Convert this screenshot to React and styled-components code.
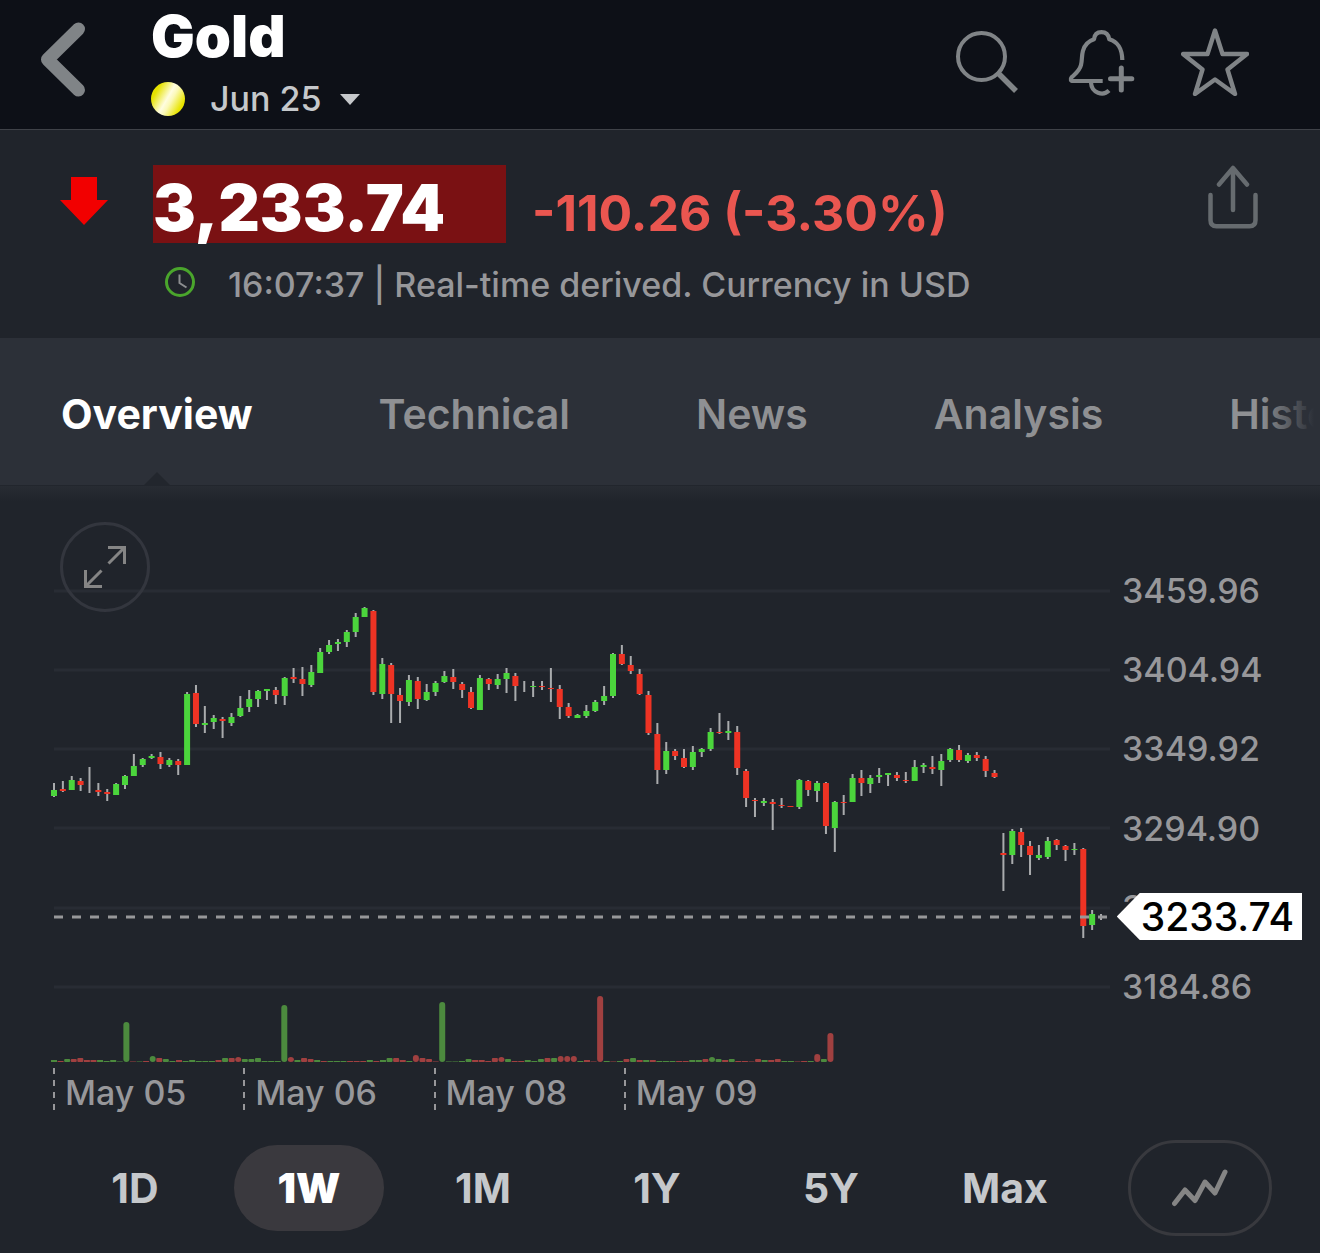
import React, { useState } from "react";
import styled, { createGlobalStyle, css } from "styled-components";

const TABS = ["Overview", "Technical", "News", "Analysis", "Historical"];
const RANGES = ["1D", "1W", "1M", "1Y", "5Y", "Max"];
const DAYS = ["May 05", "May 06", "May 08", "May 09"];
const PRICES = ["3459.96", "3404.94", "3349.92", "3294.90", "3239.88", "3184.86"];
const GRID_LINES = [591, 670, 749, 828, 908, 987];

const UP = "#4bd53c";
const DOWN = "#ee3324";

// direction, wick top, wick bottom, body top, body bottom
const CANDLES = [
  ["u", 783, 797, 790, 796], ["d", 781, 792, 789, 791], ["u", 776, 790, 780, 790],
  ["d", 778, 791, 781, 785], ["n", 767, 793, 790, 790], ["d", 783, 796, 790, 792],
  ["d", 789, 801, 792, 794], ["u", 783, 795, 784, 795], ["u", 775, 789, 776, 785],
  ["u", 754, 776, 766, 776], ["u", 758, 767, 759, 765], ["u", 754, 759, 756, 758],
  ["d", 752, 769, 757, 764], ["u", 758, 767, 760, 765], ["d", 759, 775, 761, 765],
  ["u", 692, 765, 694, 765], ["d", 685, 727, 693, 724], ["u", 706, 733, 723, 725],
  ["u", 715, 729, 718, 722], ["d", 717, 738, 719, 721], ["u", 713, 726, 717, 723],
  ["u", 696, 717, 708, 716], ["u", 690, 712, 699, 707], ["u", 690, 707, 691, 699],
  ["u", 689, 700, 689, 691], ["d", 687, 704, 690, 695], ["u", 677, 705, 678, 696],
  ["d", 668, 683, 677, 679], ["d", 667, 696, 679, 684], ["u", 665, 687, 672, 685],
  ["u", 648, 673, 652, 673], ["u", 640, 654, 645, 652], ["u", 639, 651, 642, 644],
  ["u", 630, 647, 632, 642], ["u", 613, 637, 617, 632], ["u", 607, 617, 608, 617],
  ["d", 610, 695, 611, 692], ["u", 658, 699, 664, 694], ["d", 663, 723, 665, 694],
  ["d", 688, 723, 695, 701], ["u", 675, 706, 680, 702], ["d", 677, 709, 681, 699],
  ["u", 684, 701, 692, 700], ["u", 681, 696, 683, 692], ["u", 671, 683, 676, 682],
  ["d", 669, 689, 677, 682], ["d", 682, 698, 684, 690], ["d", 687, 709, 692, 708],
  ["u", 675, 710, 678, 710], ["d", 678, 690, 679, 684], ["u", 674, 689, 679, 685],
  ["u", 668, 693, 673, 679], ["d", 673, 701, 676, 686], ["n", 681, 692, 686, 686],
  ["u", 681, 697, 686, 687], ["d", 681, 690, 686, 687], ["d", 668, 702, 688, 689],
  ["d", 685, 719, 689, 707], ["d", 703, 718, 707, 716], ["u", 714, 718, 715, 718],
  ["u", 705, 718, 711, 716], ["u", 700, 712, 702, 711], ["u", 686, 705, 696, 701],
  ["u", 653, 698, 654, 696], ["d", 645, 665, 654, 664], ["d", 656, 674, 665, 671],
  ["d", 669, 695, 674, 694], ["d", 691, 735, 695, 733], ["d", 723, 784, 734, 770],
  ["u", 742, 774, 751, 770], ["d", 749, 760, 751, 756], ["d", 749, 768, 758, 767],
  ["u", 746, 770, 752, 767], ["u", 748, 757, 749, 752], ["u", 728, 751, 732, 749],
  ["d", 713, 734, 732, 733], ["u", 721, 740, 731, 733], ["d", 726, 775, 732, 768],
  ["d", 769, 807, 771, 798], ["d", 798, 817, 800, 801], ["u", 798, 806, 801, 803],
  ["d", 799, 830, 802, 804], ["d", 798, 808, 805, 806], ["d", 806, 807, 806, 807],
  ["u", 779, 809, 780, 807], ["d", 780, 796, 781, 790], ["u", 781, 802, 783, 791],
  ["d", 782, 834, 783, 826], ["u", 801, 852, 802, 828], ["d", 795, 815, 802, 803],
  ["u", 774, 802, 778, 802], ["d", 770, 796, 778, 783], ["u", 775, 793, 778, 784],
  ["u", 768, 783, 775, 777], ["u", 773, 786, 773, 775], ["d", 772, 781, 775, 778],
  ["d", 772, 783, 780, 781], ["u", 760, 781, 767, 781], ["u", 763, 773, 765, 767],
  ["d", 756, 774, 767, 769], ["u", 754, 786, 761, 770], ["u", 748, 762, 749, 760],
  ["d", 745, 762, 750, 760], ["u", 753, 763, 755, 761], ["d", 752, 761, 755, 758],
  ["d", 756, 777, 759, 771], ["d", 770, 778, 773, 777], ["d", 833, 891, 853, 855],
  ["u", 829, 864, 831, 855], ["d", 828, 857, 832, 845], ["d", 841, 875, 846, 855],
  ["u", 845, 860, 855, 858], ["u", 837, 859, 841, 857], ["d", 839, 850, 840, 845],
  ["d", 845, 861, 846, 850], ["u", 843, 855, 849, 850], ["d", 848, 938, 849, 926],
  ["u", 910, 930, 914, 925], ["n", 914, 920, 917, 917],
];

// sign gives the colour, size gives the height
const VOLUMES = [
  2, -1, 3, -3, -4, -2, -2, 2, 1, 2, 0.5, 40, -0.5, 0.5, -1, 6, -4, 3, 1, -2,
  1, 2, 1, 1, 1, -2, 4, -4, -5, 3, 3, 4, 1, 1, 1, 57, -5, 2, -4, -3,
  2, -1, 1, 1, 1, -1, -1, -1, 2, -1, 2, 4, -4, -2, 1, -7, -4, -3, -0.5, 60,
  0.5, 0.5, 1, 3, -2, -2, -1, -4, -5, 3, -1, -1, 2, 1, 3, -4, 4, -6, -6, -6,
  1, -2, -0.5, -66, 1, -0.5, 1, -3, 4, -2, 2, -2, 1, 1, 1, -1, -1, 2, 2, -3,
  5, 3, -2, 3, -1, -1, -0.5, -3, 2, -2, -3, 1, 1, -0.5, -1, 1, -8, 3, -29,
];

const Chart = () => {
  return (
    <ChartSvg viewBox="48 571 1062 497" preserveAspectRatio="none" role="img" aria-label="Gold price, one week">
      {GRID_LINES.map((y) => (
        <line key={y} x1="54" x2="1110" y1={y} y2={y} stroke="#282c34" strokeWidth="3" />
      ))}
      {CANDLES.map(([dir, high, low, top, bottom], i) => {
        const x = 54 + i * 8.873;
        return (
          <g key={i}>
            <rect x={x - 1} y={high} width="2" height={low - high} fill="#a9abad" />
            {dir !== "n" && (
              <rect x={x - 3} y={top} width="6" height={bottom - top} fill={dir === "u" ? UP : DOWN} />
            )}
          </g>
        );
      })}
      {VOLUMES.map((v, i) => {
        const h = Math.abs(v);
        return (
          <rect
            key={i}
            x={51 + i * 6.58}
            y={1062 - h}
            width="6"
            height={h}
            rx={h > 4 ? 3 : h > 2 ? 1 : 0}
            fill={v > 0 ? "#4c8a3e" : "#a04040"}
          />
        );
      })}
      <line x1="54" x2="1108" y1="917" y2="917" stroke="#97989a" strokeWidth="3" strokeDasharray="9 9" />
    </ChartSvg>
  );
};

const App = () => {
  const [tab, setTab] = useState("Overview");
  const [range, setRange] = useState("1W");

  return (
    <Page>
      <GlobalStyle />
      <Header>
        <IconButton aria-label="Back">
          <svg width="46" height="76" viewBox="0 0 46 76" fill="none" stroke="#808487" strokeWidth="13" strokeLinecap="round" strokeLinejoin="round">
            <path d="M38.500 8 7.500 38.500 38.500 69" />
          </svg>
        </IconButton>
        <TitleWrap>
          <Title>Gold</Title>
          <Contract>
            <Coin />
            Jun 25
            <Caret />
          </Contract>
        </TitleWrap>
        <Actions>
          <IconButton aria-label="Search">
            <svg width="68" height="68" viewBox="0 0 68 68" fill="none" stroke="#808487" strokeWidth="4">
              <circle cx="28.5" cy="28.5" r="23.5" />
              <path d="M45 45 63 63" strokeWidth="5.5" />
            </svg>
          </IconButton>
          <IconButton aria-label="Add alert">
            <svg width="68" height="68" viewBox="0 0 68 68" fill="none" stroke="#808487" strokeWidth="4.2" strokeLinejoin="round">
              <path d="M35.7 53H6C3.600 53 3.200 51 4.600 49.300C8.500 45.500 12.500 43 14 37C15.300 32 14.500 28 15.900 23C17.500 17 21 13.300 27 11.300C27.500 6.500 30.500 4.200 34.500 4.200S41.500 6.500 42.300 11.300C51 14 55 20 55.300 32" />
              <path d="M24 54.500C24.500 65 36 68.500 42 62.500" />
              <path d="M43.500 50.700H64.800M54.300 40V62" strokeWidth="5" strokeLinecap="round" />
            </svg>
          </IconButton>
          <IconButton aria-label="Add to watchlist">
            <svg width="68" height="68" viewBox="0 0 68 68" fill="none" stroke="#808487" strokeWidth="4.4" strokeLinejoin="round">
              <path d="M34 2.500 41.500 26H66L46.500 41.500 54 66 34 51.500 14 66 21.500 41.500 2 26H26.500Z" />
            </svg>
          </IconButton>
        </Actions>
      </Header>

      <Quote>
        <svg width="48" height="48" viewBox="0 0 48 48">
          <path d="M11 0H37V23H48L24 48 0 23H11Z" fill="#f20000" />
        </svg>
        <QuoteInfo>
          <PriceRow>
            <Price>3,233.74</Price>
            <Change>-110.26 (-3.30%)</Change>
          </PriceRow>
          <Status>
            <svg width="30" height="30" viewBox="0 0 30 30" fill="none">
              <circle cx="15" cy="15" r="13.500" stroke="#4aa52c" strokeWidth="3" />
              <path d="M14.500 7.500V16L21.500 20.500" stroke="#8c8e90" strokeWidth="2" />
            </svg>
            16:07:37 | Real-time derived. Currency in USD
          </Status>
        </QuoteInfo>
        <IconButton aria-label="Share">
          <svg width="50" height="64" viewBox="0 0 50 64" fill="none" stroke="#666b6f" strokeWidth="4.500" strokeLinecap="round" strokeLinejoin="round">
            <path d="M2.500 30V55Q2.500 61.300 8.500 61.300H41.500Q47.500 61.300 47.500 55V30" />
            <path d="M25 3.500V45M11 19.500 25 3 39 19.500" />
          </svg>
        </IconButton>
      </Quote>

      <Tabs>
        {TABS.map((name) => (
          <Tab key={name} active={name === tab ? 1 : 0} onClick={() => setTab(name)}>
            {name}
          </Tab>
        ))}
      </Tabs>

      <ChartWrap>
        <Expand aria-label="Full screen">
          <svg width="44" height="44" viewBox="0 0 44 44" fill="none" stroke="#858585" strokeWidth="3">
            <path d="M25 2.500H41.500V19M41 3 25.500 18.500M19 41.500H2.500V25M3 41 18.500 25.500" />
          </svg>
        </Expand>
        <Chart />
        <PriceAxis>
          {PRICES.map((p) => (
            <span key={p}>{p}</span>
          ))}
        </PriceAxis>
        <Days>
          {DAYS.map((d) => (
            <Day key={d}>{d}</Day>
          ))}
        </Days>
        <PriceTag>3233.74</PriceTag>
      </ChartWrap>

      <Footer>
        <Ranges>
          {RANGES.map((r) => (
            <Range key={r} active={r === range ? 1 : 0} onClick={() => setRange(r)}>
              {r}
            </Range>
          ))}
        </Ranges>
        <ChartType aria-label="Chart type">
          <svg width="56" height="38" viewBox="0 0 56 38" fill="none" stroke="#858585" strokeWidth="5" strokeLinecap="round" strokeLinejoin="round">
            <path d="M2.500 34.500 13 21 23 31.500 33 13 43 24 53 3" />
          </svg>
        </ChartType>
      </Footer>
    </Page>
  );
};

export default App;

const GlobalStyle = createGlobalStyle`
  body {
    margin: 0;
    background: #20242b;
  }
  * {
    box-sizing: border-box;
  }
  svg {
    display: block;
  }
  button {
    margin: 0;
    padding: 0;
    border: 0;
    background: none;
    color: inherit;
    font: inherit;
    cursor: pointer;
  }
`

const Page = styled.div`
    background: #20242b;
    color: #97979a;
    font-family: Inter, "Liberation Sans", sans-serif;
    font-size: 34px;
    font-weight: 500;
    line-height: 40px;
`

const Header = styled.header`
    display: flex;
    align-items: flex-start;
    height: 130px;
    padding: 0 71px 0 40px;
    background: #0d1017;
    border-bottom: 1px solid #3f4248;
    > button {
      margin-top: 21px;
    }
`

const IconButton = styled.button`
    flex: none;
    display: block;
`

const TitleWrap = styled.div`
    flex: 1;
    padding-left: 65px;
`

const Title = styled.h1`
    margin: 0;
    color: #fff;
    font-size: 58px;
    font-weight: 900;
    line-height: 72px;
`

const Contract = styled.button`
    display: flex;
    align-items: center;
    margin-top: 7px;
    && {
      color: #c5c8cb;
    }
`

const Coin = styled.span`
    width: 34px;
    height: 34px;
    margin-right: 25px;
    border-radius: 50%;
    background: linear-gradient(120deg, #e6e200 20%, #fffde0 48%, #fbf9b8 58%, #e8e400 82%);
`

const Caret = styled.span`
    margin-left: 18px;
    border: 10px solid transparent;
    border-top: 11px solid #c5c8cb;
    border-bottom: 0;
`

const Actions = styled.div`
    display: flex;
    gap: 46px;
    margin-top: 28px;
`

const Quote = styled.section`
    display: flex;
    align-items: flex-start;
    height: 208px;
    padding: 35px 62px 0 60px;
    > svg {
      margin-top: 12px;
    }
`

const QuoteInfo = styled.div`
    flex: 1;
    padding-left: 45px;
`

const PriceRow = styled.div`
    display: flex;
    height: 78px;
`

const Price = styled.strong`
    width: 353px;
    padding-top: 3px;
    background: #7a1113;
    color: #fff;
    font-size: 64px;
    font-weight: 900;
    line-height: 80px;
`

const Change = styled.span`
    padding-left: 26px;
    color: #ea5650;
    font-size: 50px;
    font-weight: 700;
    line-height: 96px;
`

const Status = styled.div`
    display: flex;
    align-items: flex-start;
    gap: 33px;
    margin-top: 24px;
    padding-left: 12px;
    line-height: 36px;
    white-space: nowrap;
`

const Tabs = styled.nav`
    position: relative;
    display: flex;
    gap: 126px;
    height: 148px;
    padding: 0 61px;
    overflow: hidden;
    background: #2c3038;
    border-bottom: 1px solid #22262d;
    &::after {
      content: "";
      position: absolute;
      top: 0;
      right: 0;
      width: 60px;
      height: 100%;
      background: linear-gradient(90deg, transparent, #2c3038 90%);
    }
`

const Tab = styled.button`
    position: relative;
    flex: none;
    && {
      padding-top: 5px;
      color: #8f9093;
      font-size: 41px;
      font-weight: 600;
    }
    ${props => props.active && css`
      && {
        color: #fff;
        font-weight: 700;
      }
      &::after {
        content: "";
        position: absolute;
        left: 50%;
        bottom: 0;
        margin-left: -13px;
        border: 13px solid transparent;
        border-top: 0;
        border-bottom-color: #22262d;
      }
  `}
`

const ChartWrap = styled.section`
    position: relative;
    display: grid;
    grid-template-columns: 1fr 210px;
    padding: 85px 0 0 48px;
    background: linear-gradient(#282c33, #20242b 15px);
`

const ChartSvg = styled.svg`
    width: 100%;
    height: 497px;
`

const PriceAxis = styled.div`
    display: flex;
    flex-direction: column;
    justify-content: space-between;
    padding: 0 0 61px 12px;
`

const Days = styled.div`
    display: grid;
    grid-template-columns: repeat(4, 18%);
    padding-left: 5px;
`

const Day = styled.div`
    height: 42px;
    padding: 5px 0 0 12px;
    background: repeating-linear-gradient(#97979a 0 6px, transparent 6px 12px) 0 0 / 2px 100% no-repeat;
`

const PriceTag = styled.div`
    position: absolute;
    top: 407px;
    right: 18px;
    height: 47px;
    padding: 0 8px 0 24px;
    background: #fff;
    color: #000;
    font-size: 39px;
    line-height: 47px;
    clip-path: polygon(0 50%, 23px 0, 100% 0, 100% 100%, 23px 100%);
`

const Expand = styled.button`
    position: absolute;
    top: 36px;
    left: 60px;
    display: flex;
    align-items: center;
    justify-content: center;
    width: 90px;
    height: 90px;
    && {
      border: 3px solid #33363e;
      border-radius: 50%;
    }
`

const Footer = styled.footer`
    display: flex;
    align-items: center;
    gap: 48px;
    padding: 30px 48px 17px 60px;
`

const Ranges = styled.div`
    flex: 1;
    display: grid;
    grid-template-columns: repeat(6, 1fr);
    gap: 24px;
`

const Range = styled.button`
    height: 86px;
    && {
      border-radius: 43px;
      color: #c5c8cb;
      font-size: 41px;
      font-weight: 700;
    }
    ${props => props.active && css`
      && {
        background: #3a393e;
        color: #fff;
        font-weight: 900;
      }
  `}
`

const ChartType = styled.button`
    display: flex;
    align-items: center;
    justify-content: center;
    width: 144px;
    height: 96px;
    && {
      border: 3px solid #38393e;
      border-radius: 48px;
    }
`
